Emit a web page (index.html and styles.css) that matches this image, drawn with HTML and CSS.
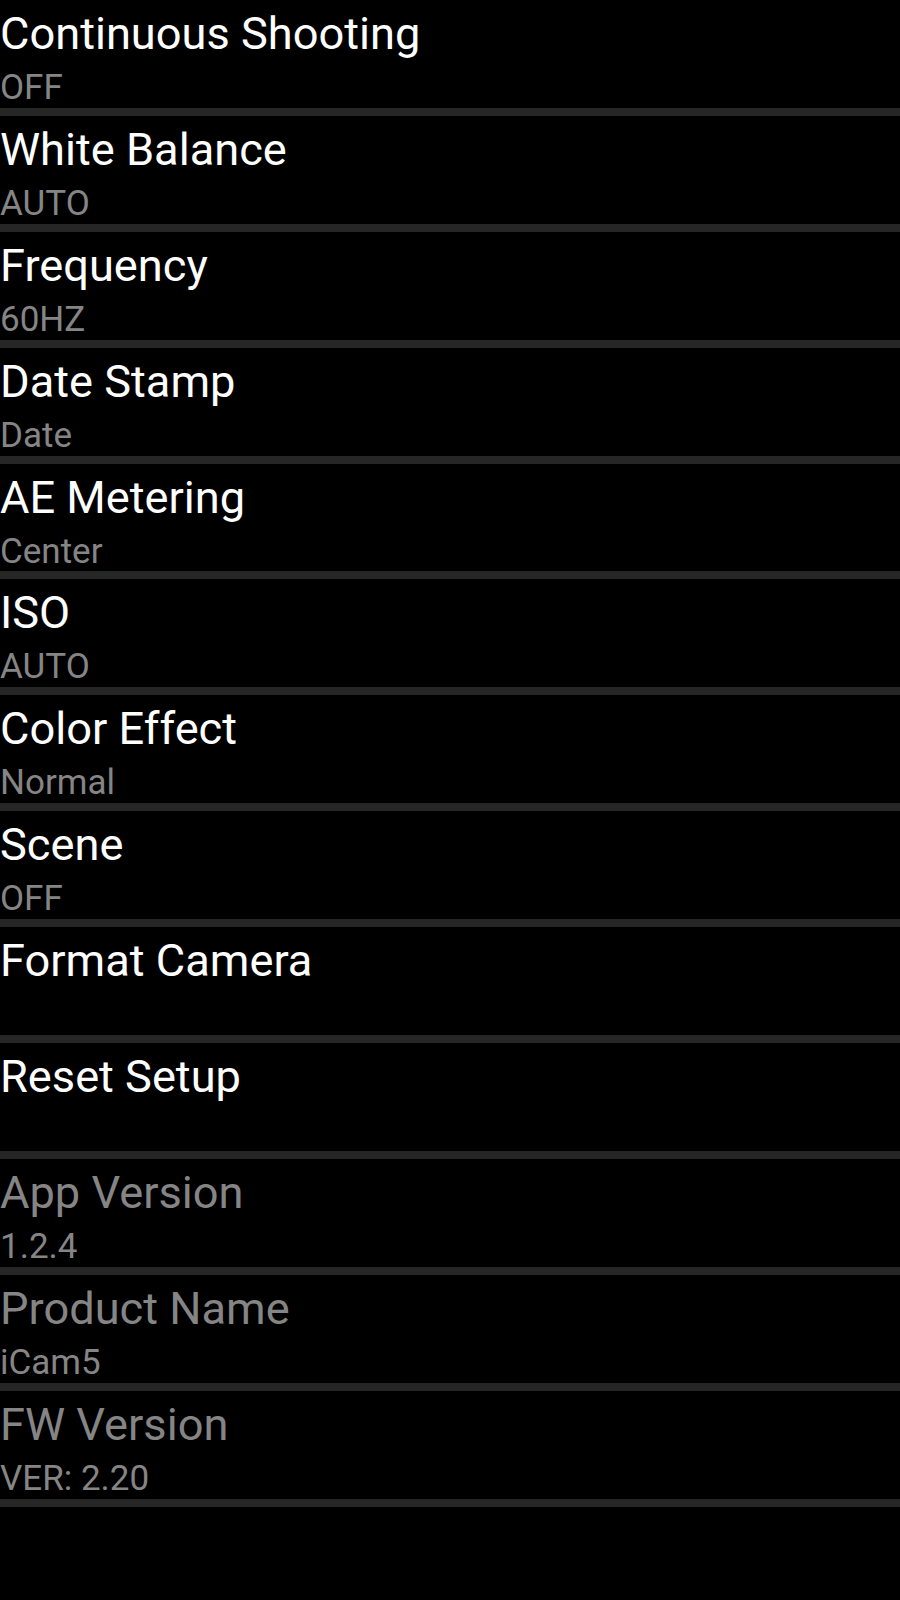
FILE: index.html
```html
<!DOCTYPE html>
<html>
<head>
<meta charset="utf-8">
<link rel="stylesheet" href="styles.css">
</head>
<body>
<div class="list">
  <div class="row"><div class="title">Continuous Shooting</div><div class="sub">OFF</div></div>
  <div class="row"><div class="title">White Balance</div><div class="sub">AUTO</div></div>
  <div class="row"><div class="title">Frequency</div><div class="sub">60HZ</div></div>
  <div class="row"><div class="title">Date Stamp</div><div class="sub">Date</div></div>
  <div class="row"><div class="title">AE Metering</div><div class="sub">Center</div></div>
  <div class="row"><div class="title">ISO</div><div class="sub">AUTO</div></div>
  <div class="row"><div class="title">Color Effect</div><div class="sub">Normal</div></div>
  <div class="row"><div class="title">Scene</div><div class="sub">OFF</div></div>
  <div class="row"><div class="title">Format Camera</div></div>
  <div class="row"><div class="title">Reset Setup</div></div>
  <div class="row disabled"><div class="title">App Version</div><div class="sub">1.2.4</div></div>
  <div class="row disabled"><div class="title">Product Name</div><div class="sub">iCam5</div></div>
  <div class="row disabled"><div class="title">FW Version</div><div class="sub">VER: 2.20</div></div>
</div>
</body>
</html>
```
FILE: styles.css
```css
html, body {
  margin: 0;
  padding: 0;
  background: #000;
}
body {
  width: 900px;
  height: 1600px;
  font-family: Roboto, "Noto Sans", sans-serif;
  overflow: hidden;
}
.list {
  display: flex;
  flex-direction: column;
}
.row {
  height: 107.9px;
  border-bottom: 8px solid #262626;
  display: flex;
  flex-direction: column;
  white-space: nowrap;
}
.title {
  font-size: 45.2px;
  line-height: 68px;
  color: #ffffff;
}
.sub {
  font-size: 35px;
  line-height: 39px;
  color: #858585;
}
.row.disabled .title {
  color: #858585;
}
```
